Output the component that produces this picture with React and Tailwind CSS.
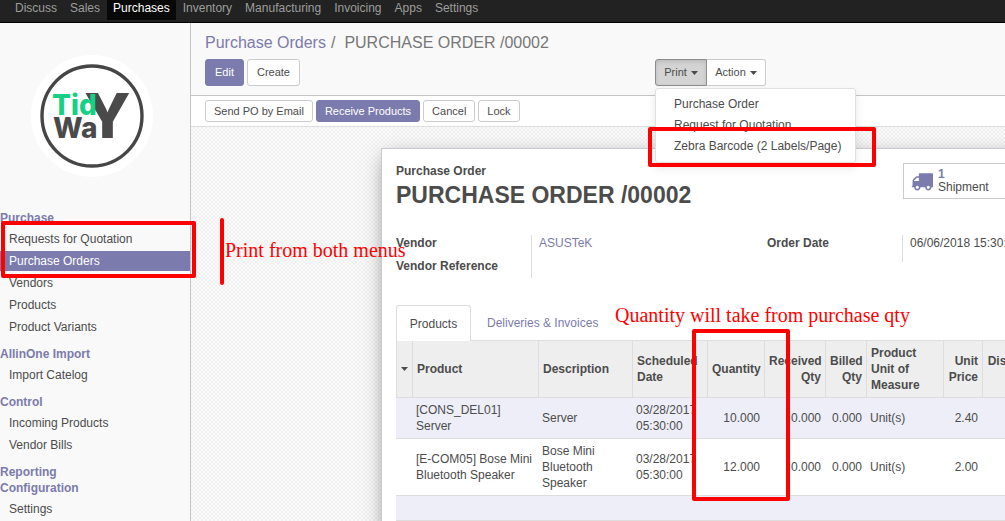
import React from 'react';

const NAV = ['Discuss', 'Sales', 'Purchases', 'Inventory', 'Manufacturing', 'Invoicing', 'Apps', 'Settings'];

const MENU = [
  { titles: ['Purchase'], items: ['Requests for Quotation', 'Purchase Orders', 'Vendors', 'Products', 'Product Variants'] },
  { titles: ['AllinOne Import'], items: ['Import Catelog'] },
  { titles: ['Control'], items: ['Incoming Products', 'Vendor Bills'] },
  { titles: ['Reporting', 'Configuration'], items: ['Settings'] },
];

const COLUMNS = [
  { label: 'Product', width: 'w-[126px]', align: 'text-left' },
  { label: 'Description', width: 'w-[94px]', align: 'text-left' },
  { label: 'Scheduled Date', width: 'w-[75px]', align: 'text-left' },
  { label: 'Quantity', width: 'w-[57px]', align: 'text-right' },
  { label: 'Received Qty', width: 'w-[61px]', align: 'text-right' },
  { label: 'Billed Qty', width: 'w-[41px]', align: 'text-right' },
  { label: 'Product Unit of Measure', width: 'w-[77px]', align: 'text-left' },
  { label: 'Unit Price', width: 'w-[39px]', align: 'text-right' },
  { label: 'Discount (%)', width: 'w-[61px]', align: 'text-right' },
];

const ROWS = [
  { height: 'h-[41px]', cells: ['[CONS_DEL01] Server', 'Server', '03/28/2017 05:30:00', '10.000', '0.000', '0.000', 'Unit(s)', '2.40', ''] },
  { height: 'h-[57px]', cells: ['[E-COM05] Bose Mini Bluetooth Speaker', 'Bose Mini Bluetooth Speaker', '03/28/2017 05:30:00', '12.000', '0.000', '0.000', 'Unit(s)', '2.00', ''] },
];

function Caret() {
  return (
    <svg viewBox="0 0 7 4" className="inline-block h-[4px] w-[7px] shrink-0" fill="currentColor" aria-hidden="true">
      <path d="M0 0h7L3.5 4z" />
    </svg>
  );
}

function Logo() {
  return (
    <svg viewBox="0 0 122 122" className="h-[122px] w-[122px]" role="img" aria-label="Tidy Way">
      <circle cx="61" cy="61" r="61" fill="#fff" />
      <circle cx="61" cy="61" r="50" fill="none" stroke="#464646" strokeWidth="3.4" />
      <g fontFamily="Inter, sans-serif" fontWeight="800">
        <text x="53" y="83" fontSize="62" fill="#4a4a4a">Y</text>
        <text x="21" y="60" fontSize="28" fill="#16d184">Tid</text>
        <text x="22" y="83" fontSize="28" fill="#4a4a4a">Wa</text>
      </g>
    </svg>
  );
}

function Truck() {
  return (
    <svg viewBox="0 0 1792 1792" className="h-[22px] w-[22px] shrink-0" fill="#7c7bad" aria-hidden="true">
      <path d="M640 1408q0-52-38-90t-90-38-90 38-38 90 38 90 90 38 90-38 38-90zm-384-512h384v-256h-158q-13 0-22 9l-195 195q-9 9-9 22v30zm1280 512q0-52-38-90t-90-38-90 38-38 90 38 90 90 38 90-38 38-90zm256-1088v1024q0 15-4 26.5t-13.5 18.5-16.5 11.5-23.5 6-22.5 2-25.5 0-22.5-.5q0 106-75 181t-181 75-181-75-75-181h-384q0 106-75 181t-181 75-181-75-75-181h-64q-3 0-22.5.5t-25.5 0-22.5-2-23.5-6-16.5-11.5-13.5-18.5-4-26.5q0-26 19-45t45-19v-320q0-8-.5-35t0-38 2.5-34.5 6.5-37 14-30.5 22.5-30l198-198q19-19 50.5-32t58.5-13h160v-192q0-26 19-45t45-19h1024q26 0 45 19t19 45z" />
    </svg>
  );
}

function Button({ primary, small, children }) {
  return (
    <button
      type="button"
      className={
        (primary ? 'border-[#7c7bad] bg-[#7c7bad] text-white ' : 'border-[#ccc] bg-white text-[#4c4c4c] ') +
        (small ? 'h-[22px] px-[8px] ' : 'h-[27px] px-[9px] ') +
        'whitespace-nowrap rounded-[3px] border text-[11px]'
      }
    >
      {children}
    </button>
  );
}

function Sidebar() {
  return (
    <aside className="w-[191px] shrink-0 border-r border-[#c4c4c4] bg-[#f9f9f9]">
      <div className="flex justify-center pt-[32px] pb-[33px] pr-[6px]">
        <Logo />
      </div>
      {MENU.map((section) => (
        <section key={section.titles[0]} className="mb-[9px]">
          {section.titles.map((title) => (
            <h2 key={title} className="font-bold leading-4 text-[#7c7bad]">{title}</h2>
          ))}
          <ul className="mt-[3px] flex flex-col gap-[2px]">
            {section.items.map((item) => (
              <li key={item}>
                <a
                  href="#"
                  className={
                    'block pl-[9px] leading-5 ' +
                    (item === 'Purchase Orders' ? 'bg-[#7c7bad] text-white' : 'text-[#4c4c4c]')
                  }
                >
                  {item}
                </a>
              </li>
            ))}
          </ul>
        </section>
      ))}
    </aside>
  );
}

function ControlPanel() {
  return (
    <div className="h-[73px] border-b border-[#c4c4c4] bg-[#f9f9f9] px-[14px] pt-[10px]">
      <div className="whitespace-nowrap text-[16px] leading-5 text-[#777]">
        <a href="#" className="text-[#7c7bad]">Purchase Orders</a>
        <span className="ml-[5px] mr-[9px]">/</span>
        <span>PURCHASE ORDER /00002</span>
      </div>
      <div className="mt-[6px] flex">
        <div className="flex w-[450px] gap-[3px]">
          <Button primary>Edit</Button>
          <Button>Create</Button>
        </div>
        <div className="relative flex">
          <button type="button" className="flex h-[27px] w-[52px] items-center justify-center gap-1 rounded-l-[3px] border border-[#8c8c8c] bg-[#d4d4d4] text-[11px] shadow-[inset_0_2px_4px_rgba(0,0,0,0.12)]">
            Print <Caret />
          </button>
          <button type="button" className="flex h-[27px] w-[59px] items-center justify-center gap-1 rounded-r-[3px] border border-l-0 border-[#ccc] bg-white text-[11px]">
            Action <Caret />
          </button>
          <ul className="absolute left-0 top-[29px] z-10 w-[201px] rounded-[3px] border border-[#e0e0e0] bg-white py-[5px] shadow-[0_5px_10px_rgba(0,0,0,0.1)]">
            {['Purchase Order', 'Request for Quotation', 'Zebra Barcode (2 Labels/Page)'].map((label) => (
              <li key={label}>
                <a href="#" className="block whitespace-nowrap pl-[18px] leading-[21px]">{label}</a>
              </li>
            ))}
          </ul>
        </div>
      </div>
    </div>
  );
}

function OrderLines() {
  return (
    <table className="w-[647px] table-fixed border-separate border-spacing-0">
      <thead>
        <tr className="h-[57px] bg-[#eee]">
          <th className="w-[17px] border-x border-b border-[#ddd] text-center align-middle" aria-label="Options">
            <span className="flex justify-center"><Caret /></span>
          </th>
          {COLUMNS.map((column) => (
            <th
              key={column.label}
              className={'border-b border-r border-[#ddd] px-[4px] align-middle font-bold leading-4 ' + column.width + ' ' + column.align}
            >
              {column.label}
            </th>
          ))}
        </tr>
      </thead>
      <tbody>
        {ROWS.map((row) => (
          <tr key={row.cells[0]} className={'odd:bg-[#eeeef8] ' + row.height}>
            <td className="border-b border-[#ddd]"></td>
            {row.cells.map((cell, i) => (
              <td
                key={i}
                className={
                  'border-b border-[#ddd] align-middle leading-4 ' +
                  (COLUMNS[i].align === 'text-right' ? 'px-[5px] text-right' : 'px-[3px] text-left')
                }
              >
                {cell}
              </td>
            ))}
          </tr>
        ))}
        <tr className="h-[25px] bg-[#eeeef8]">
          <td colSpan={10} className="border-b border-[#ddd]"></td>
        </tr>
      </tbody>
    </table>
  );
}

function Sheet() {
  return (
    <article className="ml-[190px] mt-[21px] min-h-[400px] w-[680px] border border-[#c8c8d3] bg-white px-[14px] pt-[14px] shadow-[0_5px_20px_-5px_rgba(0,0,0,0.5)]">
      <div className="flex h-[72px]">
        <div className="w-[507px]">
          <p className="font-bold leading-4">Purchase Order</p>
          <h1 className="whitespace-nowrap text-[23px] font-bold leading-8">PURCHASE ORDER /00002</h1>
        </div>
        <button type="button" className="flex h-[36px] w-[130px] items-center gap-[5px] border border-[#ccc] pl-[7px] text-left">
          <Truck />
          <span className="leading-[13px]">
            <span className="block font-bold text-[#7c7bad]">1</span>
            <span className="block">Shipment</span>
          </span>
        </button>
      </div>
      <div className="flex">
        <dl className="grid w-[371px] grid-cols-[135px_1fr] leading-4">
          <dt className="pb-[7px] font-bold">Vendor</dt>
          <dd className="border-l border-[#ddd] pl-[7px]"><a href="#" className="text-[#7c7bad]">ASUSTeK</a></dd>
          <dt className="pb-[4px] font-bold">Vendor Reference</dt>
          <dd className="border-l border-[#ddd]"></dd>
        </dl>
        <dl className="grid grid-cols-[135px_1fr] self-start leading-4">
          <dt className="pb-[11px] font-bold">Order Date</dt>
          <dd className="whitespace-nowrap border-l border-[#ddd] pl-[7px]">06/06/2018 15:30:55</dd>
        </dl>
      </div>
      <div className="mt-[27px] flex w-[647px] border-b border-[#ddd]" role="tablist">
        <button type="button" role="tab" aria-selected="true" className="-mb-px h-[36px] w-[75px] rounded-t-[3px] border border-b-0 border-[#ddd] bg-white">
          Products
        </button>
        <button type="button" role="tab" aria-selected="false" className="ml-[2px] h-[35px] px-[14px] text-[#7c7bad]">
          Deliveries &amp; Invoices
        </button>
      </div>
      <OrderLines />
    </article>
  );
}

export default function App() {
  return (
    <div className="relative flex h-screen flex-col overflow-hidden bg-[#f9f9f9] font-['Liberation_Sans',Arial,sans-serif] text-[12px] text-[#4c4c4c]">
      <nav className="flex h-[23px] shrink-0 items-start gap-[1px] border-b border-black bg-[#222] pl-[9px]">
        {NAV.map((item) => (
          <a
            key={item}
            href="#"
            className={
              'block h-[20px] px-[6px] leading-[16px] ' +
              (item === 'Purchases' ? 'bg-[#080808] text-white' : 'text-[#9d9d9d]')
            }
          >
            {item}
          </a>
        ))}
      </nav>
      <div className="flex min-h-0 flex-1">
        <Sidebar />
        <main className="flex min-w-0 flex-1 flex-col">
          <ControlPanel />
          <div className="flex h-[31px] shrink-0 items-start gap-[3px] border-b border-[#ddd] bg-white px-[14px] pt-[4px]">
            <Button small>Send PO by Email</Button>
            <Button small primary>Receive Products</Button>
            <Button small>Cancel</Button>
            <Button small>Lock</Button>
          </div>
          <div className="min-h-0 flex-1 overflow-hidden bg-[#fafafa] bg-[conic-gradient(#f1f1f1_25%,transparent_0_50%,#f1f1f1_0_75%,transparent_0)] bg-[length:4px_4px]">
            <Sheet />
          </div>
        </main>
      </div>

      {/* Red call-outs drawn over the page */}
      <div className="absolute left-[1px] top-[221px] z-20 h-[57px] w-[195px] rounded-[2px] border-4 border-[#f00]" />
      <div className="absolute left-[220px] top-[218px] z-20 h-[67px] w-[4px] rounded-[2px] bg-[#f00]" />
      <p className="absolute left-[225px] top-[238px] z-20 whitespace-nowrap font-['Liberation_Serif',serif] text-[20px] leading-6 text-[#f00]">
        Print from both menus
      </p>
      <div className="absolute left-[648px] top-[127px] z-20 h-[40px] w-[228px] rounded-[2px] border-4 border-[#f00]" />
      <p className="absolute left-[615px] top-[303px] z-20 whitespace-nowrap font-['Liberation_Serif',serif] text-[20px] leading-6 text-[#f00]">
        Quantity will take from purchase qty
      </p>
      <div className="absolute left-[692px] top-[329px] z-20 h-[172px] w-[98px] rounded-[2px] border-4 border-[#f00]" />
    </div>
  );
}
